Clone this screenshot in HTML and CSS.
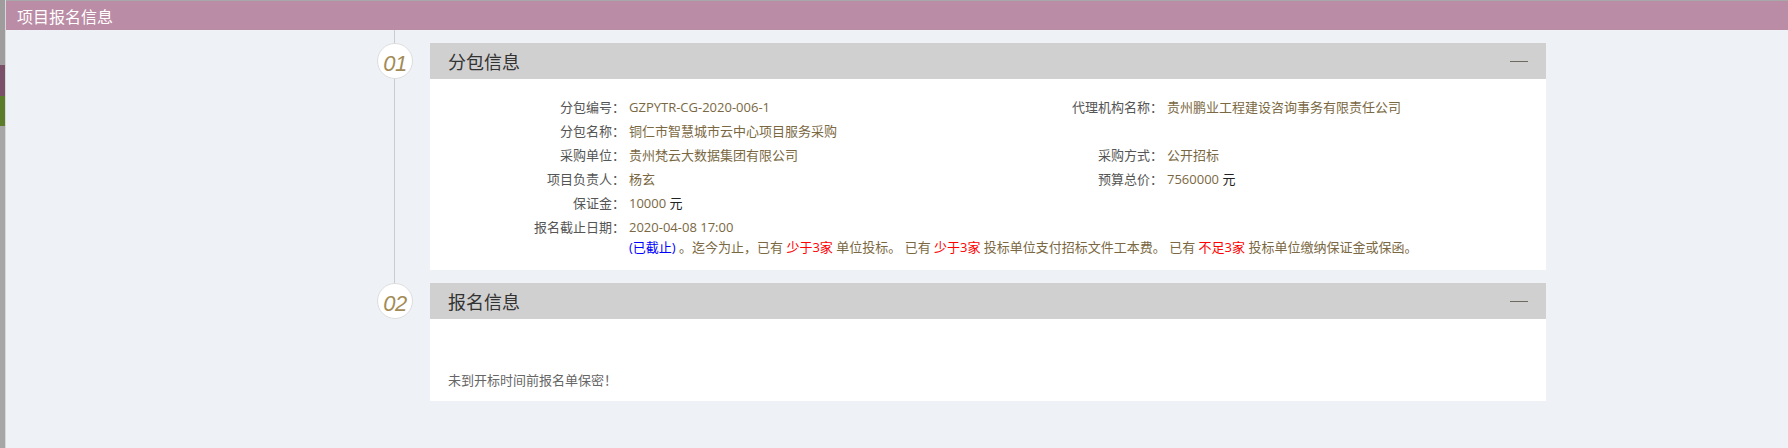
FILE: index.html
```html
<!doctype html>
<html lang="zh-CN">
<head>
    <meta charset="utf-8">
    <title>项目报名信息</title>
    <link rel="stylesheet" href="styles.css">
</head>
<body>
    <!-- 左侧菜单边条 -->
    <div class="side"></div>

    <div class="main">
        <div class="topbar">项目报名信息</div>

        <div class="steps">
            <!-- 01 分包信息 -->
            <div class="step">
                <div class="num">01</div>
                <div class="panel">
                    <div class="panel-head">
                        <span class="panel-title">分包信息</span>
                        <span class="fold"></span>
                    </div>
                    <div class="panel-body info">
                        <div class="lbl">分包编号：</div>
                        <div class="val">GZPYTR-CG-2020-006-1</div>
                        <div class="lbl">代理机构名称：</div>
                        <div class="val">贵州鹏业工程建设咨询事务有限责任公司</div>

                        <div class="lbl">分包名称：</div>
                        <div class="val">铜仁市智慧城市云中心项目服务采购</div>
                        <div class="lbl"></div>
                        <div class="val"></div>

                        <div class="lbl">采购单位：</div>
                        <div class="val">贵州梵云大数据集团有限公司</div>
                        <div class="lbl">采购方式：</div>
                        <div class="val">公开招标</div>

                        <div class="lbl">项目负责人：</div>
                        <div class="val">杨玄</div>
                        <div class="lbl">预算总价：</div>
                        <div class="val">7560000 <span class="unit">元</span></div>

                        <div class="lbl">保证金：</div>
                        <div class="val">10000 <span class="unit">元</span></div>
                        <div class="lbl"></div>
                        <div class="val"></div>

                        <div class="lbl">报名截止日期：</div>
                        <div class="val val-wide">
                            2020-04-08 17:00<br>
                            <span class="blue">(已截止)</span> 。迄今为止，已有 <span class="red">少于3家</span> 单位投标。 已有 <span class="red">少于3家</span> 投标单位支付招标文件工本费。 已有 <span class="red">不足3家</span> 投标单位缴纳保证金或保函。
                        </div>
                    </div>
                </div>
            </div>

            <!-- 02 报名信息 -->
            <div class="step">
                <div class="num">02</div>
                <div class="panel">
                    <div class="panel-head">
                        <span class="panel-title">报名信息</span>
                        <span class="fold"></span>
                    </div>
                    <div class="panel-body note">未到开标时间前报名单保密！</div>
                </div>
            </div>
        </div>
    </div>
</body>
</html>
```

FILE: styles.css
```css
:root {
    --page-bg: #eef2f6;
    --bar-bg: #bb8ca5;
    --head-bg: #d0d0d0;
    --label-color: #555;
    --value-color: #7a6842;
    --num-color: #a38b56;
    --line-color: #cccccc;
}

body {
    margin: 0;
    height: 448px;
    display: flex;
    background-color: var(--page-bg);
    font-family: "Open Sans", "Noto Sans CJK SC", sans-serif;
    font-size: 13px;
    color: var(--label-color);
    overflow: hidden;
}

.side {
    width: 5px;
    flex: none;
    border-right: 1px solid #d8d8d8;
    background: linear-gradient(to bottom,
        #a09c9d 0, #a09c9d 65px,
        #7b4f68 65px, #7b4f68 96px,
        #5b7c2b 96px, #5b7c2b 126px,
        #a6a6a6 126px);
}

.main {
    flex: 1;
}

.topbar {
    height: 29px;
    border-top: 1px solid #a8a8a8;
    background-color: var(--bar-bg);
    color: #fff;
    font-family: "Noto Sans CJK SC", sans-serif;
    font-size: 16px;
    line-height: 31px;
    padding-left: 11px;
}

.steps {
    position: relative;
    width: 1169px;
    margin-left: 371px;
    padding-top: 13px;
}

/* 竖向时间线 */
.steps::before {
    content: "";
    position: absolute;
    left: 17px;
    top: 0;
    width: 1px;
    height: 253px;
    background-color: var(--line-color);
}

.step {
    position: relative;
    display: flex;
    gap: 17px;
    margin-bottom: 13px;
}

.num {
    flex: none;
    width: 34px;
    height: 34px;
    border: 1px solid #dddddd;
    border-radius: 50%;
    background-color: #fff;
    color: var(--num-color);
    font-family: "Liberation Sans", Arial, sans-serif;
    font-style: italic;
    font-size: 22px;
    line-height: 39px;
    text-align: center;
    letter-spacing: -0.5px;
}

.panel {
    flex: 1;
    background-color: #fff;
}

.panel-head {
    height: 36px;
    background-color: var(--head-bg);
    display: flex;
    align-items: center;
    justify-content: space-between;
    padding: 0 18px;
}

.panel-title {
    font-family: "Noto Sans CJK SC", sans-serif;
    font-size: 18px;
    color: #333;
    line-height: 36px;
}

.fold {
    width: 18px;
    height: 1px;
    border-top: 1px solid #6d695f;
    margin-top: 2px;
}

.info {
    display: grid;
    grid-template-columns: 195px 340px 198px 1fr;
    padding: 16px 0 13px;
    line-height: 24px;
}

.lbl {
    text-align: right;
    white-space: nowrap;
}

.val {
    padding-left: 4px;
    color: var(--value-color);
    white-space: nowrap;
}

.val-wide {
    grid-column: 2 / 5;
    line-height: 20px;
    padding-top: 2px;
}

.unit {
    color: #222;
}

.blue {
    color: #0000ff;
}

.red {
    color: #ff0000;
}

.note {
    padding: 51px 18px 11px;
    line-height: 20px;
    color: #666;
}
```
